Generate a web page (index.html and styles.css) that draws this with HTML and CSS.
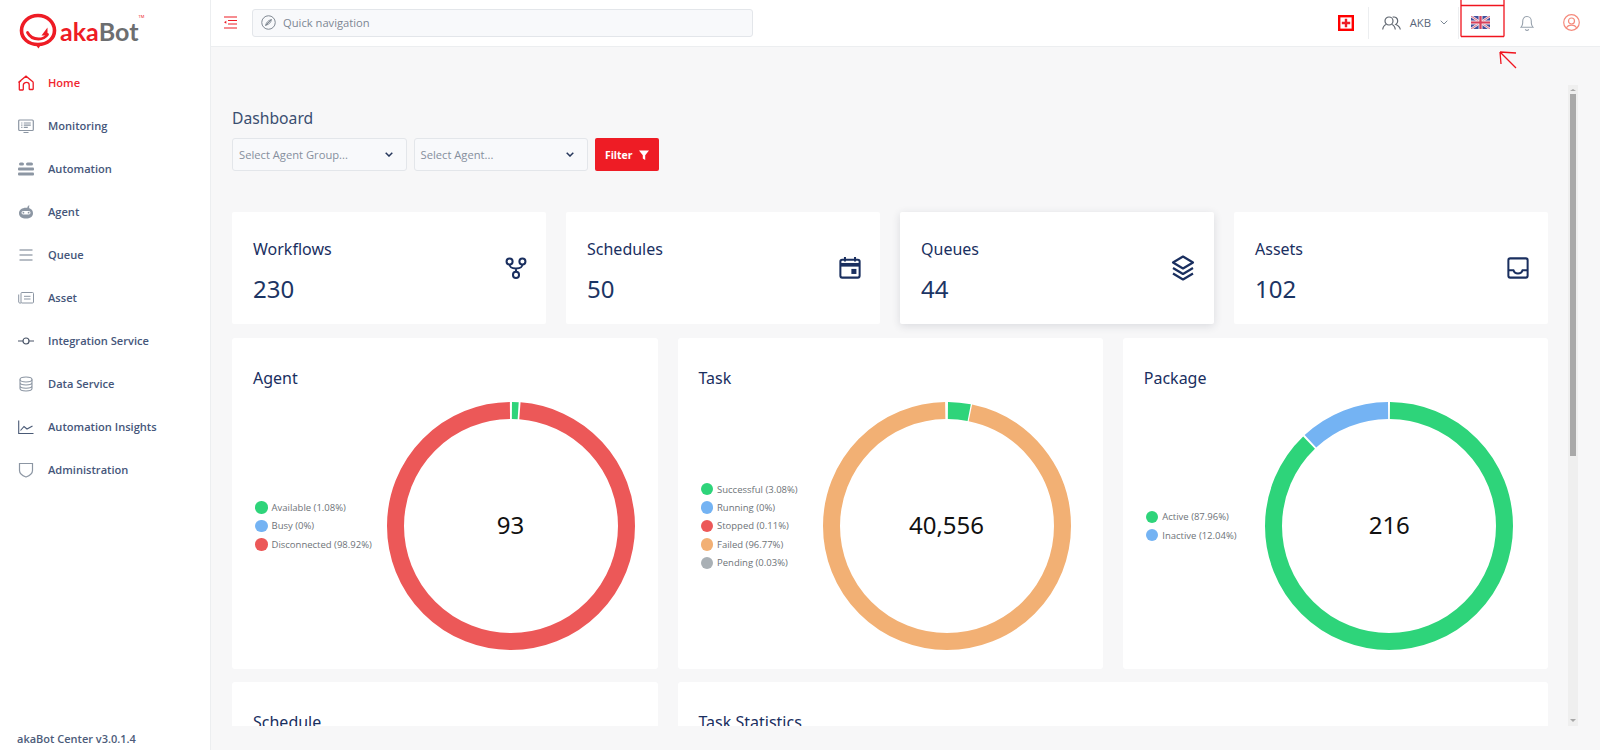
FILE: index.html
```html
<!DOCTYPE html>
<html lang="en">
<head>
<meta charset="utf-8">
<title>akaBot Center</title>
<link rel="stylesheet" href="styles.css">
</head>
<body>
<aside class="sidebar">
  <div class="logo">
    <svg class="logo-mark" viewBox="0 0 38 36" fill="none"><path d="M19 31.5C9.5 31.5 2.5 25.5 2.5 17.5S9.5 2.5 19 2.5 35.500 9.500 35.500 17.500 28.500 31.500 19 31.500Z" stroke="#ee1c25" stroke-width="3.600"/><path d="M8.500 19.500c2.500 5 7 6.500 11 6.500 3.500 0 7-1.500 9-4.500" stroke="#ee1c25" stroke-width="2.800" stroke-linecap="round"/><path d="M28.500 14.500v8h-6z" fill="#ee1c25"/><path d="M16 31l6 .5-2.500 4z" fill="#ee1c25"/></svg>
    <span class="logo-aka">aka</span><span class="logo-bot">Bot</span><span class="logo-tm">TM</span>
  </div>
  <nav class="nav">
    <a class="nav-item nav-item-active"><svg class="nav-icon" viewBox="0 0 16 16" fill="none" stroke="#ee1c25" stroke-width="1.300"><path d="M1.200 6.800 8 1.200l6.800 5.600c.3.3.4.600.4 1v6.200c0 .3-.2.500-.5.500h-3c-.3 0-.5-.2-.5-.5V10c0-1.500-1.300-2.600-2.700-2.600S5.300 8.500 5.300 10v4.500c0 .3-.2.500-.5.500h-3c-.3 0-.5-.2-.5-.5V7.800c0-.4 0-.7.400-1Z"/></svg><span>Home</span></a>
    <a class="nav-item"><svg class="nav-icon" viewBox="0 0 16 16" fill="none" stroke="#8c96a3" stroke-width="1.200"><rect x=".7" y="2" width="14.600" height="10.500" rx="1"/><path d="M3.200 5h1.200M3.200 7.200h1.200M3.200 9.400h1.200M5.800 5h7M5.800 7.200h7M5.800 9.400h4M5.500 14.500h5" /></svg><span>Monitoring</span></a>
    <a class="nav-item"><svg class="nav-icon" viewBox="0 0 16 16" fill="#8c96a3"><rect x="1" y="1.500" width="5" height="3" rx="1.500"/><rect x="8" y="1.500" width="7" height="3" rx="1.500"/><rect x="0" y="6.500" width="16" height="3" rx="1"/><rect x="0" y="11.500" width="16" height="3" rx="1"/></svg><span>Automation</span></a>
    <a class="nav-item"><svg class="nav-icon" viewBox="0 0 16 16" fill="#8c96a3"><path d="M9.800 2.300 11 1.300l.6.700-.8.800c.3.500.5 1 .5 1.400 2.300.7 3.700 2.500 3.700 5 0 3.300-3 5.300-7 5.300s-7-2-7-5.300c0-3.300 3-5.500 7-5.500.5 0 1 0 1.300.1.100-.5.300-1.100.500-1.500Z"/><rect x="3.500" y="7" width="9" height="3.400" rx="1.700" fill="#fff"/><circle cx="5.400" cy="8.700" r=".9"/><circle cx="10.600" cy="8.700" r=".9"/></svg><span>Agent</span></a>
    <a class="nav-item"><svg class="nav-icon" viewBox="0 0 16 16" fill="none" stroke="#a0a8b2" stroke-width="1.300"><path d="M1.500 3h13M1.500 8h13M1.500 13h13"/></svg><span>Queue</span></a>
    <a class="nav-item"><svg class="nav-icon" viewBox="0 0 16 16" fill="none" stroke="#8c96a3" stroke-width="1"><rect x="3" y="2.500" width="12.500" height="10.500" rx="1"/><path d="M.7 4.500V12c0 .6.500 1 1 1H3M6 6.300h6.500M6 9h6.500"/></svg><span>Asset</span></a>
    <a class="nav-item"><svg class="nav-icon" viewBox="0 0 16 16" fill="none" stroke="#4a5568" stroke-width="1.200"><circle cx="8" cy="8" r="3"/><path d="M0 8h5M11 8h5"/></svg><span>Integration Service</span></a>
    <a class="nav-item"><svg class="nav-icon" viewBox="0 0 16 16" fill="none" stroke="#8c96a3" stroke-width="1.100"><ellipse cx="8" cy="3.500" rx="6" ry="2.500"/><path d="M2 3.500v9c0 1.400 2.700 2.500 6 2.500s6-1.100 6-2.500v-9M2 6.500c0 1.400 2.700 2.500 6 2.500s6-1.100 6-2.500M2 9.800c0 1.400 2.700 2.500 6 2.500s6-1.100 6-2.500"/></svg><span>Data Service</span></a>
    <a class="nav-item"><svg class="nav-icon" viewBox="0 0 16 16" fill="none" stroke="#4a5a76" stroke-width="1.100"><path d="M.7 1.500v13h14.800M2.500 11.500l3.500-4 3 2.500 5.500-3"/></svg><span>Automation Insights</span></a>
    <a class="nav-item"><svg class="nav-icon" viewBox="0 0 16 16" fill="none" stroke="#8c96a3" stroke-width="1.200"><path d="M1.500 1.500h13v7c0 3.300-3.200 5.300-6.500 6.500-3.300-1.200-6.500-3.200-6.500-6.500z"/></svg><span>Administration</span></a>
  </nav>
  <div class="version">akaBot Center v3.0.1.4</div>
</aside>

<div class="main">
  <header class="topbar">
    <svg class="menu-icon" viewBox="0 0 14 13" fill="none" stroke="#ee1c25" stroke-width="1.200"><path d="M1 1h13M5 4.500h9M5 8h9M1 12h13"/><path d="M3.300 4.800 1 6.300l2.300 1.500z" fill="#ee1c25" stroke="none"/></svg>
    <div class="quicknav">
      <svg class="compass" viewBox="0 0 14 14" fill="none" stroke="#7b838e" stroke-width=".9"><circle cx="7" cy="7" r="6.300"/><path d="M9.700 4.300c-.4 2.300-1.400 4-5.400 5.400.7-2.700 2.200-4.600 5.400-5.400ZM4.300 9.700 9.700 4.300"/></svg>
      <span>Quick navigation</span>
    </div>
    <div class="topbar-actions">
      <svg class="plus-icon" viewBox="0 0 16 16"><rect x="1.200" y="1.200" width="13.600" height="13.600" fill="none" stroke="#f00" stroke-width="2.400"/><path d="M8 3.800v8.400M3.800 8h8.400" stroke="#ee1c25" stroke-width="2.400"/></svg>
      <div class="topbar-user">
        <svg class="group-icon" viewBox="0 0 19 14" fill="none" stroke="#5f6670" stroke-width="1.200"><circle cx="7" cy="5" r="4"/><path d="M.7 13.500c.4-2.800 2-4.500 3.500-5M13.300 13.500c-.4-2.800-2-4.500-3.500-5"/><path d="M10.700 1.200c2.800-.8 5 1 5 3.800 0 1.500-.7 2.800-1.900 3.500 1.700.7 4 2 4.500 5"/></svg>
        <span>AKB</span>
        <svg class="chevron" viewBox="0 0 8 5" fill="none" stroke="#7b8794"><path d="M.7.700 4 4 7.300.700"/></svg>
      </div>
      <div class="topbar-flag">
        <svg class="flag" viewBox="0 0 19 13"><rect width="19" height="13" fill="#3f4f9c"/><path d="M0 0l19 13M19 0 0 13" stroke="#f3e6ea" stroke-width="2.400"/><path d="M0 0l19 13M19 0 0 13" stroke="#d8506a" stroke-width=".8"/><path d="M9.500 0v13M0 6.500h19" stroke="#f3e6ea" stroke-width="4"/><path d="M9.500 0v13M0 6.500h19" stroke="#d8405a" stroke-width="2.200"/></svg>
      </div>
      <svg class="bell" viewBox="0 0 14 16" fill="none" stroke="#98a2ad" stroke-width="1.100"><path d="M1 12.300h12c-1.200-1.300-1.700-2.500-1.700-4.600V6.200C11.300 3.500 9.400 1.500 7 1.500S2.700 3.500 2.700 6.200v1.500c0 2.100-.5 3.300-1.700 4.600Z"/><path d="M5.300 14.200c.4.800 1 1.200 1.700 1.200s1.300-.4 1.700-1.200"/></svg>
      <svg class="user-icon" viewBox="0 0 17 17" fill="none" stroke="#f58a7c" stroke-width="1.200"><circle cx="8.500" cy="8.500" r="7.800"/><circle cx="8.500" cy="7" r="3"/><path d="M3.300 14.200c.9-2 2.800-3 5.200-3s4.300 1 5.200 3"/></svg>
    </div>
  </header>

  <div class="content">
    <div class="scroll">
      <h1 class="page-title">Dashboard</h1>
      <div class="filters">
        <div class="select"><span>Select Agent Group...</span><svg class="select-chevron" viewBox="0 0 8 5" fill="none" stroke="#27385c" stroke-width="1.500"><path d="M.7.700 4 4 7.300.700"/></svg></div>
        <div class="select"><span>Select Agent...</span><svg class="select-chevron" viewBox="0 0 8 5" fill="none" stroke="#27385c" stroke-width="1.500"><path d="M.7.700 4 4 7.300.700"/></svg></div>
        <button class="filter-btn">Filter<svg class="funnel" viewBox="0 0 10 10" fill="#fff"><path d="M0 .500h10L6.200 5.300V10L3.800 8.500V5.300z"/></svg></button>
      </div>

      <section class="stats">
        <div class="stat">
          <div class="stat-text"><div class="card-title">Workflows</div><div class="stat-value">230</div></div>
          <svg class="stat-icon" viewBox="0 0 24 24" fill="none" stroke="#1a2f5f" stroke-width="2.200"><circle cx="5" cy="5" r="3.300"/><circle cx="19" cy="5" r="3.300"/><circle cx="12" cy="19.500" r="3.300"/><path d="M5 8c0 3.500 2 4.500 7 4.500s7-1 7-4.500M12 12.500v4"/></svg>
        </div>
        <div class="stat">
          <div class="stat-text"><div class="card-title">Schedules</div><div class="stat-value">50</div></div>
          <svg class="stat-icon" viewBox="0 0 24 24" fill="none" stroke="#1a2f5f" stroke-width="2.200"><rect x="1.500" y="3" width="21" height="19.500" rx="2"/><path d="M6.500 0v5M17.500 0v5"/><path d="M1.500 8.500h21" stroke-width="4"/><rect x="13.500" y="13" width="5.500" height="5.500" fill="#1a2f5f" stroke="none"/></svg>
        </div>
        <div class="stat stat-raised">
          <div class="stat-text"><div class="card-title">Queues</div><div class="stat-value">44</div></div>
          <svg class="stat-icon stat-icon-layers" viewBox="0 0 24 26" fill="none" stroke="#1a2f5f" stroke-width="2.200" stroke-linejoin="round"><path d="M12 1.500 22 7.500 12 13.500 2 7.500z"/><path d="M2 13 12 19 22 13M2 18.500 12 24.500 22 18.500"/></svg>
        </div>
        <div class="stat">
          <div class="stat-text"><div class="card-title">Assets</div><div class="stat-value">102</div></div>
          <svg class="stat-icon" viewBox="0 0 24 24" fill="none" stroke="#1a2f5f" stroke-width="2.200"><rect x="1.500" y="1.500" width="21" height="21" rx="2"/><path d="M1.500 14.500H7c.7 2.200 2.500 3.500 5 3.500s4.300-1.300 5-3.500h5.500"/></svg>
        </div>
      </section>

      <section class="charts">
        <div class="card">
          <div class="card-title">Agent</div>
          <div class="chart-body">
            <ul class="legend legend-agent">
              <li><i class="dot dot-green"></i>Available (1.08%)</li>
              <li><i class="dot dot-blue"></i>Busy (0%)</li>
              <li><i class="dot dot-red"></i>Disconnected (98.92%)</li>
            </ul>
            <div class="donut">
              <svg viewBox="0 0 248 248" fill="none" stroke-width="17">
                <circle class="arc-red" cx="124" cy="124" r="115.500" pathLength="100" stroke-dasharray="98.600 1.400" stroke-dashoffset="-1.250"/>
                <circle class="arc-green" cx="124" cy="124" r="115.500" pathLength="100" stroke-dasharray=".88 99.120" stroke-dashoffset="-.13"/>
              </svg>
              <span class="donut-value">93</span>
            </div>
          </div>
        </div>
        <div class="card">
          <div class="card-title">Task</div>
          <div class="chart-body">
            <ul class="legend legend-task">
              <li><i class="dot dot-green"></i>Successful (3.08%)</li>
              <li><i class="dot dot-blue"></i>Running (0%)</li>
              <li><i class="dot dot-red"></i>Stopped (0.11%)</li>
              <li><i class="dot dot-orange"></i>Failed (96.77%)</li>
              <li><i class="dot dot-gray"></i>Pending (0.03%)</li>
            </ul>
            <div class="donut">
              <svg viewBox="0 0 248 248" fill="none" stroke-width="17">
                <circle class="arc-orange" cx="124" cy="124" r="115.500" pathLength="100" stroke-dasharray="96.500 3.500" stroke-dashoffset="-3.250"/>
                <circle class="arc-green" cx="124" cy="124" r="115.500" pathLength="100" stroke-dasharray="2.950 97.050" stroke-dashoffset="-.13"/>
              </svg>
              <span class="donut-value">40,556</span>
            </div>
          </div>
        </div>
        <div class="card">
          <div class="card-title">Package</div>
          <div class="chart-body">
            <ul class="legend legend-package">
              <li><i class="dot dot-green"></i>Active (87.96%)</li>
              <li><i class="dot dot-blue"></i>Inactive (12.04%)</li>
            </ul>
            <div class="donut">
              <svg viewBox="0 0 248 248" fill="none" stroke-width="17">
                <circle class="arc-green" cx="124" cy="124" r="115.500" pathLength="100" stroke-dasharray="87.700 12.300" stroke-dashoffset="-.13"/>
                <circle class="arc-blue" cx="124" cy="124" r="115.500" pathLength="100" stroke-dasharray="11.780 88.220" stroke-dashoffset="-88.090"/>
              </svg>
              <span class="donut-value">216</span>
            </div>
          </div>
        </div>
        <div class="card card-low">
          <div class="card-title">Schedule</div>
        </div>
        <div class="card card-low card-wide">
          <div class="card-title">Task Statistics</div>
        </div>
      </section>
    </div>
    <div class="scrollbar">
      <span class="scroll-arrow scroll-arrow-up"></span>
      <span class="scroll-thumb"></span>
      <span class="scroll-arrow scroll-arrow-down"></span>
    </div>
  </div>
</div>

<svg class="annotation" viewBox="0 0 70 72" fill="none" stroke="#f0141e" stroke-width="1.300">
  <path d="M3 0v36.500M46 0v36.500M3 5.500h43M3 36.500h43"/>
  <path d="M58 68 42 52M42 52l1 12M42 52l16 1"/>
</svg>
</body>
</html>
```

FILE: styles.css
```css
* { box-sizing: border-box; }
html, body { height: 100%; }
body {
  margin: 0;
  display: flex;
  height: 750px;
  overflow: hidden;
  background: #f7f7f8;
  color: #1a2f5f;
  font-family: "Noto Sans", "Open Sans", sans-serif;
}

/* Sidebar */
.sidebar {
  width: 211px;
  flex: none;
  display: flex;
  flex-direction: column;
  background: #fff;
  border-right: 1px solid #eceef0;
}
.logo {
  height: 61px;
  padding: 13px 0 0 19px;
  display: flex;
  align-items: flex-start;
}
.logo-mark { width: 38px; height: 36px; flex: none; }
.logo-aka, .logo-bot {
  font-family: "Lato", sans-serif;
  font-weight: 700;
  font-size: 25px;
  line-height: 30px;
  margin-top: 3px;
}
.logo-aka { color: #ee1c25; margin-left: 3px; }
.logo-bot { color: #6c6e70; }
.logo-tm { font-size: 4px; line-height: 4px; color: #ee1c25; margin-top: 2px; }

.nav { flex: 1; display: flex; flex-direction: column; }
.nav-item {
  height: 43.050px;
  display: flex;
  align-items: center;
  gap: 14px;
  padding-left: 18px;
  font-family: "Open Sans", sans-serif;
  font-size: 11.100px;
  font-weight: 600;
  color: #45567a;
}
.nav-item-active { color: #f0262f; }
.nav-icon { width: 16px; height: 16px; flex: none; }
.version {
  padding: 0 0 2px 17px;
  font-family: "Open Sans", sans-serif;
  font-size: 11px;
  font-weight: 600;
  line-height: 18px;
  color: #4d5c7a;
}

/* Main column */
.main { flex: 1; min-width: 0; display: flex; flex-direction: column; }
.topbar {
  height: 47px;
  flex: none;
  display: flex;
  align-items: center;
  padding: 0 20px 1px 12px;
  background: #fff;
  border-bottom: 1px solid #eceef0;
}
.menu-icon { width: 14px; height: 13px; flex: none; }
.quicknav {
  width: 501px;
  height: 28px;
  margin-left: 15px;
  padding-left: 8px;
  display: flex;
  align-items: center;
  gap: 7px;
  background: #f8f9fb;
  border: 1px solid #e3e6ea;
  border-radius: 3px;
  font-family: "Open Sans", sans-serif;
  font-size: 11.200px;
  color: #7d8794;
}
.compass { width: 15px; height: 15px; flex: none; }
.topbar-actions { margin-left: auto; display: flex; align-items: center; }
.plus-icon { width: 16px; height: 16px; flex: none; }
.topbar-user {
  height: 32px;
  margin-left: 14px;
  padding: 0 10px 0 13px;
  display: flex;
  align-items: center;
  gap: 9px;
  border-left: 1px solid #eceef0;
  border-right: 1px solid #eceef0;
  font-family: "Open Sans", sans-serif;
  font-size: 11.300px;
  color: #58657a;
}
.group-icon { width: 19px; height: 14px; flex: none; }
.chevron { width: 8px; height: 5px; flex: none; }
.topbar-flag { padding: 0 30px 0 12px; display: flex; }
.flag { width: 19px; height: 13px; }
.bell { width: 14px; height: 16px; flex: none; margin-right: 29px; }
.user-icon { width: 17px; height: 17px; flex: none; }

/* Content */
.content {
  flex: 1;
  min-height: 0;
  display: flex;
  padding: 38px 0 24px 21px;
}
.scroll { width: 1316px; flex: none; overflow: hidden; }
.page-title {
  margin: 22px 0 9px;
  font-size: 15.700px;
  font-weight: 400;
  line-height: 22px;
  color: #3a4e70;
}
.filters { display: flex; gap: 7px; margin-bottom: 41px; }
.select {
  width: 174.500px;
  height: 33px;
  padding: 0 13px 0 6px;
  display: flex;
  align-items: center;
  justify-content: space-between;
  background: #f8f9fb;
  border: 1px solid #e3e6ea;
  border-radius: 3px;
  font-family: "Open Sans", sans-serif;
  font-size: 11.200px;
  color: #868f9d;
}
.select-chevron { width: 8px; height: 5px; flex: none; }
.filter-btn {
  width: 63.500px;
  height: 33px;
  padding: 0;
  display: flex;
  align-items: center;
  justify-content: center;
  gap: 6px;
  background: #ee1c25;
  border: 0;
  border-radius: 2px;
  color: #fff;
  font-family: "Open Sans", sans-serif;
  font-size: 10.500px;
  font-weight: 700;
}
.funnel { width: 10px; height: 10px; }

.stats {
  display: grid;
  grid-template-columns: repeat(4, 1fr);
  gap: 20px;
  margin-bottom: 14px;
}
.stat {
  height: 112px;
  padding: 0 19px 0 21px;
  display: flex;
  align-items: center;
  justify-content: space-between;
  background: #fff;
  border-radius: 2px;
}
.stat-raised { box-shadow: 0 2px 8px rgba(40, 50, 70, .14); }
.stat-text { margin-top: 7px; }
.card-title {
  font-size: 16px;
  line-height: 20px;
  color: #1a2f5f;
}
.stat-value {
  margin-top: 15px;
  font-size: 24px;
  line-height: 30px;
  color: #1c3564;
}
.stat-icon { width: 22px; height: 22px; flex: none; }
.stat-icon-layers { width: 24px; height: 26px; }

.charts {
  display: grid;
  grid-template-columns: repeat(3, 1fr);
  column-gap: 20px;
  row-gap: 13px;
}
.card {
  height: 331px;
  padding: 30px 23px 0 21px;
  background: #fff;
  border-radius: 3px;
}
.card-low { height: 200px; }
.card-wide { grid-column: span 2; }
.chart-body {
  display: flex;
  align-items: center;
  margin-top: 14px;
  margin-left: 2px;
}
.legend {
  flex: none;
  margin: 0;
  padding: 0;
  list-style: none;
  font-family: "Open Sans", sans-serif;
  font-size: 9.500px;
  color: #6e7378;
}
.legend-agent { width: 131.500px; }
.legend-task { width: 122px; }
.legend-package { width: 119.500px; }
.legend li { height: 18.400px; display: flex; align-items: center; gap: 4px; white-space: nowrap; }
.dot { width: 12.500px; height: 12.500px; border-radius: 50%; flex: none; }
.dot-green { background: #2ed47a; }
.dot-blue { background: #74b3f3; }
.dot-red { background: #ec5858; }
.dot-orange { background: #f2b074; }
.dot-gray { background: #a9b0b5; }

.donut {
  position: relative;
  width: 248px;
  height: 248px;
  flex: none;
}
.donut svg { display: block; width: 248px; height: 248px; transform: rotate(-90deg); }
.arc-red { stroke: #ec5858; }
.arc-green { stroke: #2ed47a; }
.arc-blue { stroke: #74b3f3; }
.arc-orange { stroke: #f2b074; }
.donut-value {
  position: absolute;
  inset: 0;
  padding-bottom: 4px;
  display: flex;
  align-items: center;
  justify-content: center;
  font-size: 24px;
  color: #111;
}

/* Scrollbar */
.scrollbar {
  width: 10px;
  margin-left: 20px;
  flex: none;
  display: flex;
  flex-direction: column;
  align-items: center;
  background: #efefef;
}
.scroll-arrow { width: 0; height: 0; flex: none; border-left: 3px solid transparent; border-right: 3px solid transparent; }
.scroll-arrow-up { margin: 4px 0 3px; border-bottom: 2px solid #a8a8a8; }
.scroll-arrow-down { margin: auto 0 4px; border-top: 3px solid #a8a8a8; }
.scroll-thumb { width: 6px; height: 362px; flex: none; background: #a9a9a9; }

/* Hand-drawn annotation lying over the top bar */
.annotation {
  position: absolute;
  left: 1458px;
  top: 0;
  width: 70px;
  height: 72px;
}
```
